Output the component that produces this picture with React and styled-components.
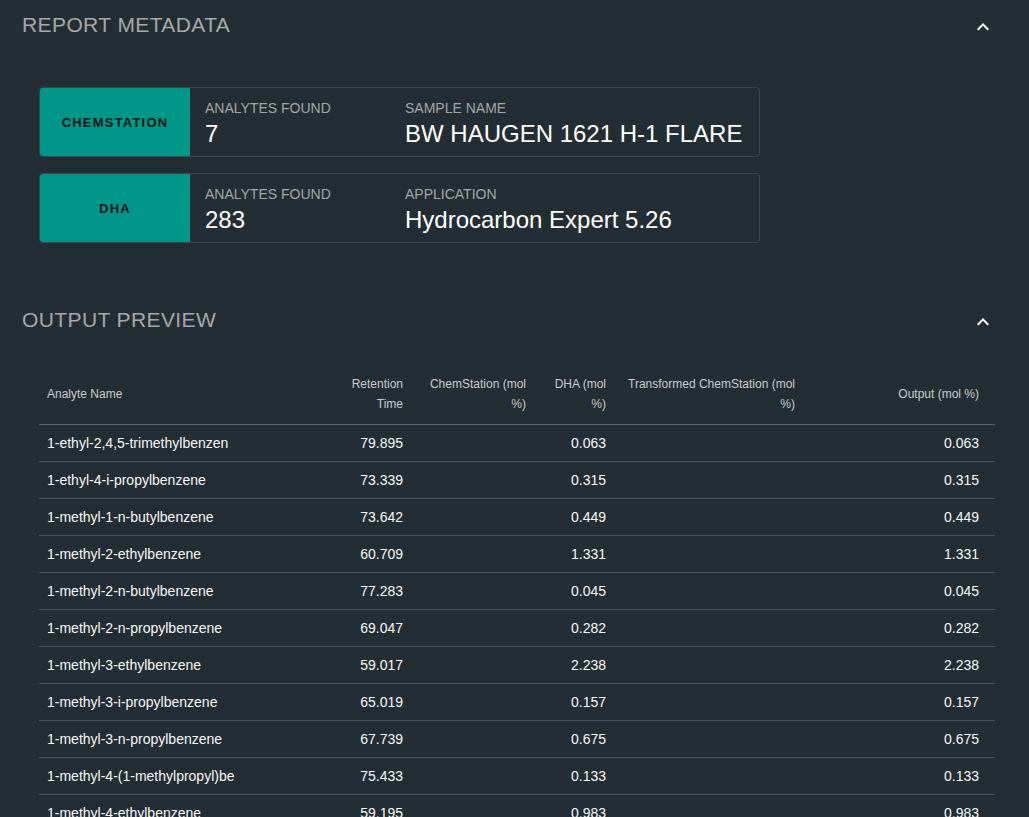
import React from "react";
import styled, { createGlobalStyle } from "styled-components";

const GlobalStyle = createGlobalStyle`
  html, body {
    margin: 0;
    padding: 0;
    background: #222e33;
  }
  body {
    font-family: "Liberation Sans", Arial, sans-serif;
    color: #ffffff;
  }
`;

const Page = styled.div`
  width: 1029px;
  min-height: 817px;
  box-sizing: border-box;
  padding: 0 34px 0 22px;
  background: #222e33;
  overflow: hidden;
`;

const Section = styled.section`
  display: flex;
  flex-direction: column;
`;

const SectionHeader = styled.div`
  height: 50px;
  display: flex;
  align-items: center;
  justify-content: space-between;
`;

const SectionTitle = styled.h2`
  margin: 0;
  font-family: "Liberation Sans", Arial, sans-serif;
  font-size: 21px;
  font-weight: 400;
  color: #a6a8a9;
  line-height: 24px;
  letter-spacing: 0.4px;
`;

const Chevron = styled.svg`
  width: 24px;
  height: 24px;
  margin-top: 3px;
  fill: #ffffff;
`;

const SectionBody = styled.div`
  padding: ${(p) => p.$pt}px 0 ${(p) => p.$pb}px 17px;
`;

const CardList = styled.div`
  display: flex;
  flex-direction: column;
  gap: 16px;
`;

const Card = styled.div`
  width: 721px;
  height: 70px;
  box-sizing: border-box;
  display: flex;
  border: 1px solid #3c484c;
  border-radius: 4px;
`;

const Badge = styled.div`
  width: 150px;
  flex: none;
  display: flex;
  align-items: center;
  justify-content: center;
  background: #009688;
  border-radius: 3px 0 0 3px;
  color: #0d1414;
  font-size: 13px;
  font-weight: 700;
  letter-spacing: 1.2px;
`;

const Fields = styled.div`
  display: grid;
  grid-template-columns: 200px 1fr;
  padding: 12px 0 0 15px;
  align-content: start;
`;

const Field = styled.div`
  display: flex;
  flex-direction: column;
`;

const FieldLabel = styled.span`
  font-size: 14px;
  line-height: 16px;
  color: #a3a6a7;
`;

const FieldValue = styled.span`
  font-size: 24px;
  line-height: 28px;
  margin-top: 4px;
  color: #ffffff;
`;

const Table = styled.table`
  width: 956px;
  table-layout: fixed;
  border-collapse: collapse;
`;

const HeadCell = styled.th`
  padding: 9px 8px 10px;
  font-size: 12px;
  line-height: 20px;
  font-weight: 400;
  color: #caccce;
  text-align: ${(p) => (p.$align === "left" ? "left" : "right")};
  vertical-align: middle;
  border-bottom: 1px solid #5a6265;
  &:last-child {
    padding-right: 16px;
  }
`;

const Row = styled.tr`
  border-bottom: 1px solid #4a5357;
`;

const Cell = styled.td`
  padding: 8px 8px;
  font-size: 14px;
  line-height: 20px;
  color: #f7f7f7;
  white-space: nowrap;
  overflow: hidden;
  text-align: ${(p) => (p.$align === "left" ? "left" : "right")};
  &:last-child {
    padding-right: 16px;
  }
`;

const ExpandLess = () => (
  <Chevron viewBox="0 0 24 24" aria-hidden="true">
    <path d="M12 8l-6 6 1.41 1.41L12 10.83l4.59 4.58L18 14z" />
  </Chevron>
);

const sources = [
  { name: "CHEMSTATION", count: "7", label: "SAMPLE NAME", value: "BW HAUGEN 1621 H-1 FLARE" },
  { name: "DHA", count: "283", label: "APPLICATION", value: "Hydrocarbon Expert 5.26" },
];

const columns = [
  { title: "Analyte Name", width: 292, align: "left" },
  { title: "Retention Time", width: 80 },
  { title: "ChemStation (mol %)", width: 123 },
  { title: "DHA (mol %)", width: 80 },
  { title: "Transformed ChemStation (mol %)", width: 189 },
  { title: "Output (mol %)", width: 192 },
];

const rows = [
  ["1-ethyl-2,4,5-trimethylbenzen", "79.895", "0.063"],
  ["1-ethyl-4-i-propylbenzene", "73.339", "0.315"],
  ["1-methyl-1-n-butylbenzene", "73.642", "0.449"],
  ["1-methyl-2-ethylbenzene", "60.709", "1.331"],
  ["1-methyl-2-n-butylbenzene", "77.283", "0.045"],
  ["1-methyl-2-n-propylbenzene", "69.047", "0.282"],
  ["1-methyl-3-ethylbenzene", "59.017", "2.238"],
  ["1-methyl-3-i-propylbenzene", "65.019", "0.157"],
  ["1-methyl-3-n-propylbenzene", "67.739", "0.675"],
  ["1-methyl-4-(1-methylpropyl)be", "75.433", "0.133"],
  ["1-methyl-4-ethylbenzene", "59.195", "0.983"],
  ["1-methyl-4-i-propylbenzene", "65.893", "0.211"],
];

export default function App() {
  return (
    <>
      <GlobalStyle />
      <Page>
        <Section>
          <SectionHeader>
            <SectionTitle>REPORT METADATA</SectionTitle>
            <ExpandLess />
          </SectionHeader>
          <SectionBody $pt={37} $pb={52}>
            <CardList>
              {sources.map((s) => (
                <Card key={s.name}>
                  <Badge>{s.name}</Badge>
                  <Fields>
                    <Field>
                      <FieldLabel>ANALYTES FOUND</FieldLabel>
                      <FieldValue>{s.count}</FieldValue>
                    </Field>
                    <Field>
                      <FieldLabel>{s.label}</FieldLabel>
                      <FieldValue>{s.value}</FieldValue>
                    </Field>
                  </Fields>
                </Card>
              ))}
            </CardList>
          </SectionBody>
        </Section>
        <Section>
          <SectionHeader>
            <SectionTitle>OUTPUT PREVIEW</SectionTitle>
            <ExpandLess />
          </SectionHeader>
          <SectionBody $pt={20} $pb={0}>
            <Table>
              <colgroup>
                {columns.map((c) => (
                  <col key={c.title} style={{ width: c.width }} />
                ))}
              </colgroup>
              <thead>
                <tr>
                  {columns.map((c) => (
                    <HeadCell key={c.title} $align={c.align}>
                      {c.title}
                    </HeadCell>
                  ))}
                </tr>
              </thead>
              <tbody>
                {rows.map((r) => (
                  <Row key={r[0]}>
                    <Cell $align="left">{r[0]}</Cell>
                    <Cell>{r[1]}</Cell>
                    <Cell></Cell>
                    <Cell>{r[2]}</Cell>
                    <Cell></Cell>
                    <Cell>{r[2]}</Cell>
                  </Row>
                ))}
              </tbody>
            </Table>
          </SectionBody>
        </Section>
      </Page>
    </>
  );
}
